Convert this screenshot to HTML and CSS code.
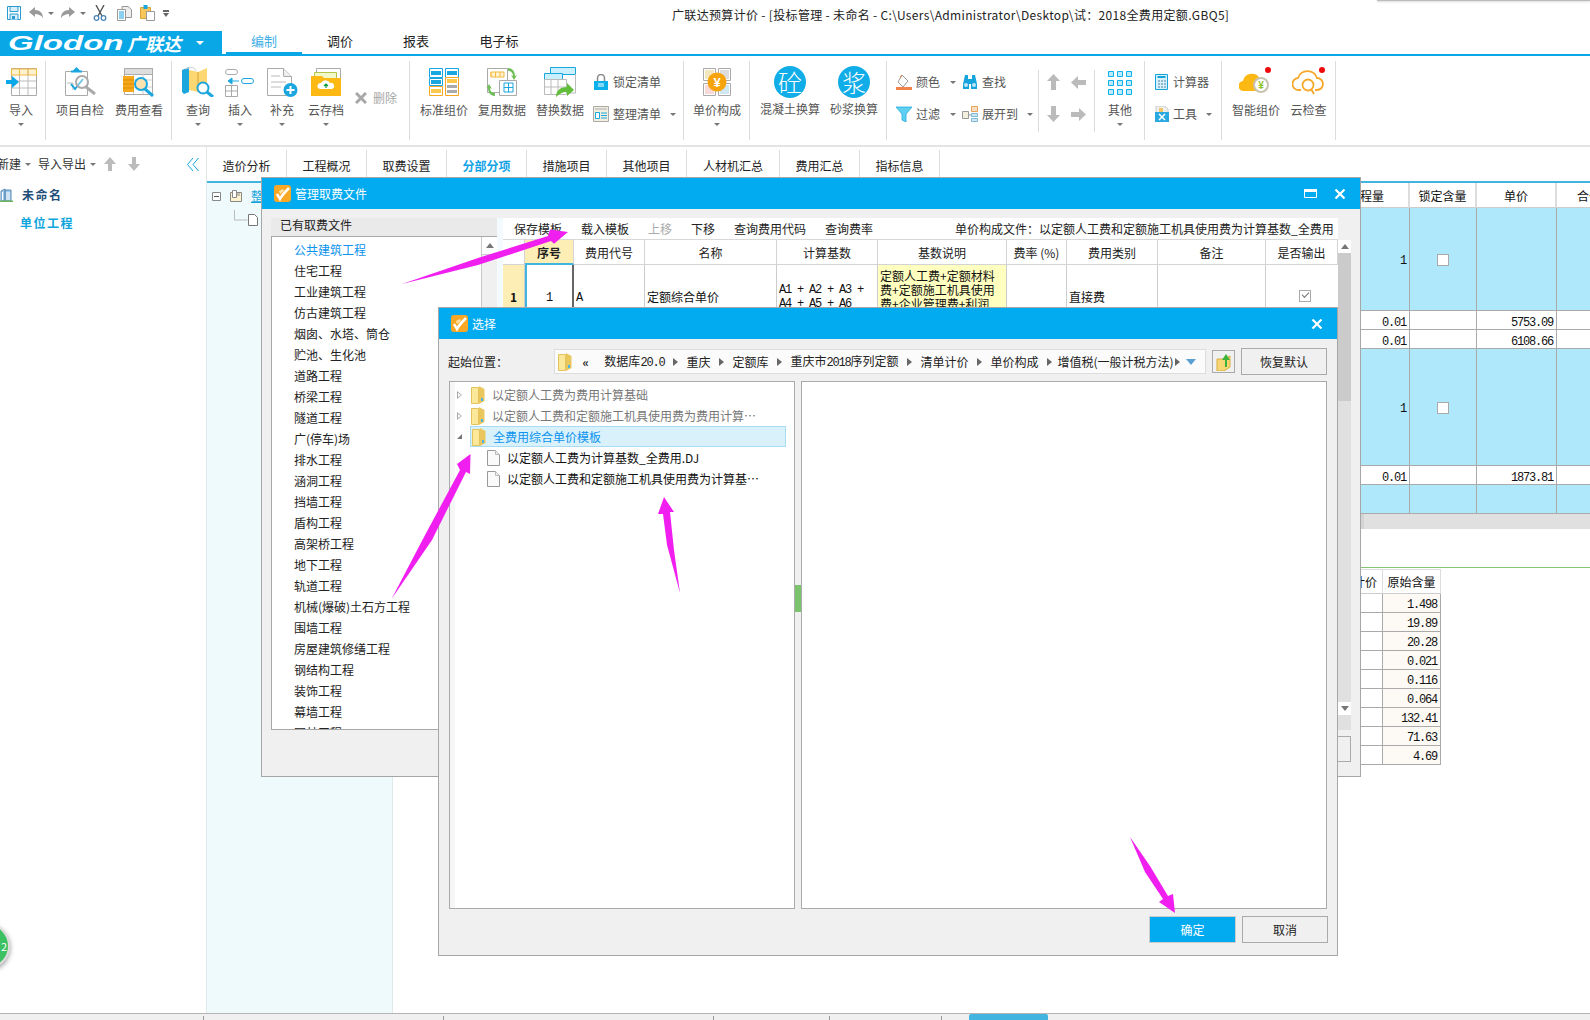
FILE: index.html
```html
<!DOCTYPE html>
<html lang="zh">
<head>
<meta charset="utf-8">
<title>广联达预算计价</title>
<link rel="stylesheet" href="styles.css">
</head>
<body>
<header class="qa-row">
  <div class="qa">
    <svg class="q-save" width="14" height="14" viewBox="0 0 14 14"><path d="M.5.5h13v13H.5z" fill="#fff" stroke="#2a9bd0"/><path d="M3 .5h8v5H3zM3 13.500V8h8v5.500" fill="#d8eef8" stroke="#2a9bd0"/><path d="M5 10h3v3H5z" fill="#2a9bd0"/></svg>
    <svg class="q-undo" width="14" height="12" viewBox="0 0 14 12"><path d="M6 0 0 5l6 5V7c3 0 6 1 8 4 0-5-3-8-8-8z" fill="#9a9a9a"/></svg>
    <i class="tri q-t"></i>
    <svg class="q-redo" width="14" height="12" viewBox="0 0 14 12"><path d="M8 0l6 5-6 5V7c-3 0-6 1-8 4 0-5 3-8 8-8z" fill="#9a9a9a"/></svg>
    <i class="tri q-t"></i>
    <svg class="q-cut" width="14" height="16" viewBox="0 0 14 16"><path d="M3 0l6 11M11 0 5 11" stroke="#555" stroke-width="1.400" fill="none"/><circle cx="3.500" cy="13" r="2.300" fill="none" stroke="#4a86b8" stroke-width="1.300"/><circle cx="10.500" cy="13" r="2.300" fill="none" stroke="#4a86b8" stroke-width="1.300"/></svg>
    <svg class="q-copy" width="15" height="15" viewBox="0 0 15 15"><path d="M5 .5h6l3.500 3v8H5z" fill="#eee" stroke="#999"/><path d="M.5 3.500h8v11h-8z" fill="#fff" stroke="#999"/><path d="M2 6h5M2 8h5M2 10h5M2 12h5" stroke="#1a9fe0"/></svg>
    <svg class="q-paste" width="15" height="16" viewBox="0 0 15 16"><path d="M.5 2.500h10v11H.5z" fill="#f6c65b" stroke="#d9a43a"/><path d="M3.500 0h4v4h-4z" fill="#1aa7e0"/><path d="M6.500 6.500h8v9h-8z" fill="#fff" stroke="#999"/></svg>
    <svg class="q-more" width="6" height="7" viewBox="0 0 6 7"><path d="M0 0h6v2H0zM0 3h6L3 7z" fill="#666"/></svg>
  </div>
  <div class="win-title">广联达预算计价 - [投标管理 - 未命名 - C:\Users\Administrator\Desktop\试：2018全费用定额.GBQ5]</div>
</header>

<nav class="nav-row">
  <div class="brand"><span class="brand-en">Glodon</span><span class="brand-cn">广联达</span><i class="tri tri-w"></i></div>
  <div class="nav-tabs">
    <span class="nav-tab on">编制</span><span class="nav-tab">调价</span><span class="nav-tab">报表</span><span class="nav-tab wide">电子标</span>
  </div>
</nav>

<section class="ribbon">
  <div class="grp g1">
    <div class="rb w42"><svg width="31" height="30" viewBox="0 0 31 30"><path d="M5.500 1.500h25v27h-25z" fill="#fff" stroke="#aaa"/><path d="M5.500 2h25v6h-25z" fill="#fff3cf" stroke="#f5b942"/><path d="M13.500 2v26M22 2v26M6 14h24M6 21h24" stroke="#bbb"/><path d="M13.500 2v6M22 2v6" stroke="#f5b942"/><path d="M0 13h6V9l7 6-7 6v-4H0z" fill="#09a8ea"/></svg><b>导入</b><i class="tri"></i></div>
  </div>
  <div class="grp g2">
    <div class="rb w58"><svg width="32" height="30" viewBox="0 0 32 30"><path d="M1.500 4.500h22v24h-22z" fill="#fff" stroke="#aaa"/><path d="M9 3.500 12.500 0 16 3.500h2v2H7v-2z" fill="#1aa7e0"/><path d="M3 16h6v7" fill="none" stroke="#bbb"/><path d="M7 17l4 5 8-10" fill="none" stroke="#15a3dc" stroke-width="2"/><circle cx="18" cy="15" r="6" fill="#fff" fill-opacity=".4" stroke="#aaa" stroke-width="2"/><path d="M22 20l9 7" stroke="#aaa" stroke-width="3"/></svg><b>项目自检</b></div>
    <div class="rb w58 m1"><svg width="32" height="30" viewBox="0 0 32 30"><path d="M1.500 1.500h28v26h-28z" fill="#fff" stroke="#aaa"/><path d="M1.500 1.500h28v6h-28z" fill="#ddd" stroke="#aaa"/><path d="M10.500 7v20M20 7v20M2 13h27M2 20h27" stroke="#ccc"/><path d="M0 9h11v16H0z" fill="#f6a81c"/><path d="M0 13h11M0 17h11M0 21h11" stroke="#e08c00"/><circle cx="18" cy="17" r="6" fill="#fbe3b0" stroke="#1aa7e0" stroke-width="2"/><path d="M22 22l8 7" stroke="#1aa7e0" stroke-width="3"/></svg><b>费用查看</b></div>
  </div>
  <div class="grp g3">
    <div class="rb w42"><svg width="32" height="30" viewBox="0 0 32 30"><path d="M0 3l7-3v25l-5 2-2-2z" fill="#1ba6dd"/><path d="M7 3l9 2 9-4v20l-9 4-9-2z" fill="#fcd772"/><path d="M16 5v20" stroke="#d9a43a"/><path d="M3 2l8-2 3 4" fill="none" stroke="#ccc"/><circle cx="21" cy="21" r="5.500" fill="#fff" stroke="#1ba6dd" stroke-width="2"/><path d="M25 25l6 5" stroke="#1ba6dd" stroke-width="3"/></svg><b>查询</b><i class="tri"></i></div>
    <div class="rb w42"><svg width="30" height="30" viewBox="0 0 30 30"><rect x=".5" y="2.500" width="12" height="5" rx="2.500" fill="#fff" stroke="#aaa"/><rect x="16.500" y="11.500" width="12" height="5" rx="2.500" fill="#fff" stroke="#1aa7e0"/><path d="M14 14H7V11L3 14l4 3v-3" fill="#1aa7e0" stroke="#1aa7e0"/><path d="M.5 18.500h12v11H.5zM.5 24h12M6.500 19v10" fill="#fff" stroke="#aaa"/></svg><b>插入</b><i class="tri"></i></div>
    <div class="rb w42"><svg width="31" height="30" viewBox="0 0 31 30"><path d="M.5 1.500h16l8 8v19H.5z" fill="#fff" stroke="#aaa"/><path d="M16.500 1.500v8h8" fill="#eee" stroke="#aaa"/><path d="M4 9h9M4 15h15M4 20h10" stroke="#ddd" stroke-width="2"/><circle cx="23.500" cy="23" r="7" fill="#1aa7e0"/><path d="M23.500 19v8M19.500 23h8" stroke="#fff" stroke-width="2"/></svg><b>补充</b><i class="tri"></i></div>
    <div class="rb w42 m2"><svg width="31" height="30" viewBox="0 0 31 30"><path d="M5.500 1.500h24v14h-24z" fill="#fff" stroke="#aaa"/><path d="M3.500 5.500h22v14h-22z" fill="#f3f8c9" stroke="#b3c44c"/><path d="M0 9h11l2 2h17v18H0z" fill="#fcb813"/><path d="M9 22a3 3 0 0 1 1-6 5 5 0 0 1 9 0 3 3 0 0 1 2 6z" fill="#fff"/><path d="M15 21v-4M13 19l2-2 2 2" fill="none" stroke="#0a9b3b" stroke-width="1.200"/></svg><b>云存档</b><i class="tri"></i></div>
    <div class="del"><svg width="12" height="12" viewBox="0 0 12 12"><path d="M1 1l10 10M11 1 1 11" stroke="#a8a8a8" stroke-width="3"/></svg><span>删除</span></div>
  </div>
  <div class="grp g4">
    <div class="rb w58"><svg width="30" height="30" viewBox="0 0 30 30"><path d="M.5 1.500h13v9H.5z" fill="#fff" stroke="#1aa7e0"/><path d="M2 4h10v4H2z" fill="#1aa7e0"/><path d="M.5 11.500h13v7H.5z" fill="#fff" stroke="#1aa7e0"/><path d="M2 13h10v4H2z" fill="#1aa7e0"/><path d="M.5 19.500h13v9H.5z" fill="#fff" stroke="#f5a623"/><path d="M2 22h10v4H2z" fill="#fbc94c"/><path d="M16.500 1.500h13v9h-13z" fill="#fff" stroke="#1aa7e0"/><path d="M18 4h10v4H18z" fill="#1aa7e0"/><path d="M16.500 10.500h13v18h-13z" fill="#fff" stroke="#f5a623"/><path d="M18 12h10v4H18z" fill="#fbc94c"/><path d="M18 18h10v3H18zM18 23h10v3H18z" fill="#aaa"/></svg><b>标准组价</b></div>
    <div class="rb w58"><svg width="30" height="30" viewBox="0 0 30 30"><path d="M.5 1.500h20v24H.5z" fill="#fff" stroke="#aaa"/><path d="M4 5h13v5H4zM4 5v5M8.500 5v5M13 5v5" fill="#fff3cf" stroke="#f5b942"/><path d="M12.500 13.500h17v15h-17z" fill="#fff" stroke="#aaa"/><path d="M17 16h9v9h-9zM21.500 16v9M17 20.500h9" fill="#fff" stroke="#1aa7e0"/><path d="M21 1c4 0 7 3 7 8l2-1-3 5-3-5 2 1c0-3-2-5-5-5z" fill="#6fbe57"/><path d="M7 29c-4 0-7-3-7-8l-2 1 3-5 3 5-2-1c0 3 2 5 5 5z" transform="translate(1 0)" fill="#6fbe57"/></svg><b>复用数据</b></div>
    <div class="rb w58"><svg width="33" height="30" viewBox="0 0 33 30"><path d="M6.500 .5h25v7h-25z" fill="#c9f0fc" stroke="#1aa7e0"/><path d="M31.500 7v19H20" fill="none" stroke="#bbb"/><path d="M.5 6.500h18v6H.5z" fill="#c9f0fc" stroke="#1aa7e0"/><path d="M.5 12.500h22v15H.5zM7 13v14M14 13v14M1 20h21" fill="#fff" stroke="#bbb"/><path d="M12 30c0-6 4-10 11-10v-4l7 7-7 6v-4c-5 0-8 2-11 5z" fill="#62bd3a"/></svg><b>替换数据</b></div>
    <div class="stack st-g4">
      <div class="sm"><svg width="16" height="16" viewBox="0 0 16 16"><path d="M4.500 7V4a3.500 3.500 0 0 1 7 0v3" fill="none" stroke="#888" stroke-width="1.500"/><path d="M1 7h14v9H1z" fill="#0ab1ea"/><path d="M5 10h6M5 12h6" stroke="#fff"/></svg><span>锁定清单</span></div>
      <div class="sm"><svg width="16" height="16" viewBox="0 0 16 16"><path d="M.5.5h15v15H.5z" fill="#f3efdc" stroke="#aaa"/><path d="M2 3h12" stroke="#ccc" stroke-width="2"/><path d="M2.500 6.500h4v6h-4zM8 7h6M8 9.500h6M8 12h6" fill="#fff" stroke="#1aa7e0"/></svg><span>整理清单</span><i class="tri t-z"></i></div>
    </div>
  </div>
  <div class="grp g5">
    <div class="rb w66"><svg width="30" height="30" viewBox="0 0 30 30"><path d="M1.500 1.500h12v12h-12zM16.500 1.500h12v12h-12zM1.500 16.500h12v12h-12zM16.500 16.500h12v12h-12z" fill="#fff" stroke="#aaa"/><path d="M3 3h9v9H3z" fill="#f3e7bd"/><path d="M18 3h9v9h-9z" fill="#ddd"/><path d="M3 18h9v9H3z" fill="#f7d9d9"/><path d="M18 18h9v9h-9z" fill="#cfe7f3"/><circle cx="15" cy="15" r="9.500" fill="#f7a30b"/><text x="15" y="20" class="yen">¥</text></svg><b>单价构成</b><i class="tri"></i></div>
  </div>
  <div class="grp g6">
    <div class="rb w64"><span class="circ">砼</span><b>混凝土换算</b></div>
    <div class="rb w64"><span class="circ">浆</span><b>砂浆换算</b></div>
  </div>
  <div class="grp g7 short">
    <div class="stack col66">
      <div class="sm"><svg width="16" height="16" viewBox="0 0 16 16"><path d="M6 1l6 6-5 6-5-5z" fill="#fff" stroke="#999"/><path d="M6 1 4 4" stroke="#d8813d"/><path d="M0 13h16v3H0z" fill="#f0824a"/></svg><span>颜色</span><i class="tri t-c"></i></div>
      <div class="sm"><svg width="16" height="16" viewBox="0 0 16 16"><path d="M0 1h16L10 8v8l-4-2V8z" fill="#5fd0f2" stroke="#22a8dc" stroke-width=".8"/></svg><span>过滤</span><i class="tri t-c"></i></div>
    </div>
    <div class="stack">
      <div class="sm"><svg width="16" height="16" viewBox="0 0 16 16"><path d="M3 1h3v4h4V1h3l2 9v5H9v-5H7v5H1v-5z" fill="#15a5dc"/><circle cx="4" cy="11" r="2" fill="#bfe6f6"/><circle cx="12" cy="11" r="2" fill="#bfe6f6"/></svg><span>查找</span></div>
      <div class="sm"><svg width="16" height="16" viewBox="0 0 16 16"><path d="M.5 5.500h6v7h-6z" fill="#f3efdc" stroke="#999"/><path d="M9.500 .5h6v5h-6z" fill="#f7e0c2" stroke="#e8a25a"/><path d="M9.500 7.500h6v3h-6zM9.500 12.500h6v3h-6z" fill="#cfe7f3" stroke="#7dbad8"/><path d="M7 9h2" stroke="#999"/></svg><span>展开到</span><i class="tri t-e"></i></div>
    </div>
  </div>
  <div class="grp g8 short">
    <div class="stack arrows">
      <svg width="13" height="16" viewBox="0 0 13 16"><path d="M6.500 0 13 7H9v9H4V7H0z" fill="#bbb"/></svg>
      <svg width="15" height="13" viewBox="0 0 15 13"><path d="M0 6.500 7 0v4h8v5H7v4z" fill="#bbb"/></svg>
      <svg width="13" height="16" viewBox="0 0 13 16"><path d="M6.500 16 13 9H9V0H4v9H0z" fill="#bbb"/></svg>
      <svg width="15" height="13" viewBox="0 0 15 13"><path d="M15 6.500 8 0v4H0v5h8v4z" fill="#bbb"/></svg>
    </div>
  </div>
  <div class="grp g9">
    <div class="rb w50"><svg width="26" height="30" viewBox="0 0 26 30"><g fill="#bfeafa" stroke="#0ab1ea"><path d="M1.500 4.500h5v5h-5zM10.500 4.500h5v5h-5zM19.500 4.500h5v5h-5z"/><path d="M1.500 13.500h5v5h-5zM10.500 13.500h5v5h-5zM19.500 13.500h5v5h-5z"/><path d="M1.500 22.500h5v5h-5zM10.500 22.500h5v5h-5zM19.500 22.500h5v5h-5z"/></g></svg><b>其他</b><i class="tri"></i></div>
  </div>
  <div class="grp g10">
    <div class="stack">
      <div class="sm"><svg width="14" height="16" viewBox="0 0 14 16"><path d="M.5.5h12v15H.5z" fill="#d8f2fc" stroke="#15a5dc"/><path d="M2.500 3h8" stroke="#15a5dc" stroke-width="2"/><path d="M3 7h2M6 7h2M9 7h2M3 10h2M6 10h2M9 10h2M3 13h2M6 13h2M9 13h2" stroke="#4a7fa0"/></svg><span>计算器</span></div>
      <div class="sm"><svg width="14" height="16" viewBox="0 0 14 16"><path d="M1 0h9l3 3v5H1z" fill="#eee" stroke="#ccc"/><path d="M4 2h4v4H4z" fill="#f3c668"/><path d="M0 6h14v10H0z" fill="#29a9e0"/><path d="M4 8l6 6M10 8l-6 6" stroke="#fff" stroke-width="1.500"/></svg><span>工具</span><i class="tri t-t"></i></div>
    </div>
  </div>
  <div class="grp g11">
    <div class="rb w60"><svg width="34" height="30" viewBox="0 0 34 30"><path d="M5 24a5 5 0 0 1-1-10 9 9 0 0 1 17-2v12z" fill="#fcb813"/><circle cx="22" cy="18" r="7" fill="#fff" stroke="#c8c2b0" stroke-width="2"/><text x="22" y="22" class="yen2">¥</text><circle cx="29" cy="3" r="3" fill="#ee0a0a"/></svg><b>智能组价</b></div>
    <div class="rb w45"><svg width="34" height="30" viewBox="0 0 34 30"><path d="M9 23H7a6 6 0 0 1-1-12 10 10 0 0 1 19 0 6 6 0 0 1 0 12h-2" fill="none" stroke="#f7a72a" stroke-width="1.800"/><circle cx="16" cy="18" r="5.500" fill="#fff" stroke="#f7a72a" stroke-width="1.800"/><path d="M19 22l3 5" stroke="#f7a72a" stroke-width="1.800"/><circle cx="30" cy="3" r="3" fill="#ee0a0a"/></svg><b>云检查</b></div>
  </div>
</section>

<main class="work">
  <aside class="side">
    <div class="side-tools">
      <span class="st-a">新建</span><i class="tri"></i><span class="st-b">导入导出</span><i class="tri"></i>
      <svg class="st-up" width="12" height="14" viewBox="0 0 12 14"><path d="M6 0l6 7H8v7H4V7H0z" fill="#bbb"/></svg>
      <svg class="st-dn" width="12" height="14" viewBox="0 0 12 14"><path d="M6 14l6-7H8V0H4v7H0z" fill="#bbb"/></svg>
      <svg class="st-col" width="12" height="13" viewBox="0 0 12 13"><path d="M6 0 .5 6.500 6 13M11.500 0 6 6.500l5.500 6.500" fill="none" stroke="#15a5dc"/></svg>
    </div>
    <div class="proj">
      <svg width="13" height="14" viewBox="0 0 13 14"><path d="M1 13V3l4-2v12zM5 2h6v11H5z" fill="#9fc7e8" stroke="#5f8db5"/><path d="M7 4v8M9 4v8M2.500 4v8" stroke="#fff"/><path d="M0 12.500h13V14H0z" fill="#6db45a"/></svg>
      <span>未命名</span>
    </div>
    <div class="unit">单位工程</div>
    <div class="badge"><span>2</span></div>
  </aside>
  <div class="content">
    <div class="page-tabs">
      <span class="pt">造价分析</span><span class="pt">工程概况</span><span class="pt">取费设置</span><span class="pt on">分部分项</span><span class="pt">措施项目</span><span class="pt">其他项目</span><span class="pt w93">人材机汇总</span><span class="pt">费用汇总</span><span class="pt">指标信息</span>
    </div>
    <div class="pane">
      <div class="tree">
        <div class="tree-row">
          <svg width="9" height="9" viewBox="0 0 9 9"><path d="M.5.5h8v8h-8z" fill="#fff" stroke="#888"/><path d="M2 4.500h5" stroke="#555"/></svg>
          <svg width="12" height="12" viewBox="0 0 12 12"><path d="M.5 2.500h11v9H.5z" fill="#fff3cf" stroke="#888"/><path d="M2.500.5h4v7h-4zM7 3h3M7 5h3" fill="#fff" stroke="#888"/></svg>
          <span class="tree-link">整个项目</span>
        </div>
        <div class="tree-sub">
          <svg width="24" height="16" viewBox="0 0 24 16"><path d="M.5 0v10h13" fill="none" stroke="#bbb"/><path d="M14.500 4.500h6l3 3v8h-9z" fill="#fff" stroke="#777"/></svg>
        </div>
      </div>
      <div class="tables">
        <div class="grid-up">
          <div class="gh ghead-l">工程量</div><div class="gh">锁定含量</div><div class="gh">单价</div><div class="gh ghead-x">合价</div>
          <div class="gc blue tall1 r">1</div><div class="gc blue tall1 cb"><i class="chk"></i></div><div class="gc blue tall1"></div><div class="gc blue tall1"></div>
          <div class="gc r">0.01</div><div class="gc"></div><div class="gc r">5753.09</div><div class="gc"></div>
          <div class="gc r">0.01</div><div class="gc"></div><div class="gc r">6108.66</div><div class="gc"></div>
          <div class="gc blue tall2 r">1</div><div class="gc blue tall2 cb"><i class="chk"></i></div><div class="gc blue tall2"></div><div class="gc blue tall2"></div>
          <div class="gc r">0.01</div><div class="gc"></div><div class="gc r">1873.81</div><div class="gc"></div>
          <div class="gc blue"></div><div class="gc blue"></div><div class="gc blue"></div><div class="gc blue"></div>
        </div>
        <div class="hscroll"></div>
        <div class="green-line"></div>
        <div class="grid-low">
          <div class="lh lh-l">计价</div><div class="lh">原始含量</div>
          <div class="lc"></div><div class="lv">1.498</div>
          <div class="lc"></div><div class="lv">19.89</div>
          <div class="lc"></div><div class="lv">20.28</div>
          <div class="lc"></div><div class="lv">0.021</div>
          <div class="lc"></div><div class="lv">0.116</div>
          <div class="lc"></div><div class="lv">0.064</div>
          <div class="lc"></div><div class="lv">132.41</div>
          <div class="lc"></div><div class="lv">71.63</div>
          <div class="lc"></div><div class="lv">4.69</div>
        </div>
      </div>
    </div>
  </div>
</main>

<footer class="status">
  <span class="s1"></span><span class="s2"></span><span class="s3"></span><span class="s4"></span><span class="s5"></span><span class="s6"></span>
</footer>

<div class="top-shadow"></div>

<section class="dlg dlg-a">
  <div class="dlg-title">
    <svg width="17" height="17" viewBox="0 0 17 17"><rect width="17" height="17" rx="3" fill="#f9a825"/><path d="M3 9c1 2 2 3 3 5 2-4 5-7 9-11" fill="none" stroke="#fff" stroke-width="2.500"/><path d="M5 6l4-2 1 2-4 3z" fill="#fde3a7"/></svg>
    <span class="dlg-name">管理取费文件</span>
    <svg class="max-ic" width="13" height="9" viewBox="0 0 13 9"><path d="M.5.5h12v8H.5z" fill="none" stroke="#fff"/><path d="M0 0h13v3H0z" fill="#fff"/></svg>
    <svg class="x-ic" width="12" height="10" viewBox="0 0 12 10"><path d="M1.500 .5l9 9M10.500 .5l-9 9" stroke="#fff" stroke-width="2.200"/></svg>
  </div>
  <div class="a-main">
    <div class="a-left">
      <div class="a-cap">已有取费文件</div>
      <div class="a-list">
        <ul>
          <li class="sel">公共建筑工程</li><li>住宅工程</li><li>工业建筑工程</li><li>仿古建筑工程</li><li>烟囱、水塔、筒仓</li><li>贮池、生化池</li><li>道路工程</li><li>桥梁工程</li><li>隧道工程</li><li>广(停车)场</li><li>排水工程</li><li>涵洞工程</li><li>挡墙工程</li><li>盾构工程</li><li>高架桥工程</li><li>地下工程</li><li>轨道工程</li><li>机械(爆破)土石方工程</li><li>围墙工程</li><li>房屋建筑修缮工程</li><li>钢结构工程</li><li>装饰工程</li><li>幕墙工程</li><li>园林工程</li>
        </ul>
        <div class="vbar"><span class="vbtn"><i class="up"></i></span></div>
      </div>
    </div>
    <div class="a-strip"></div>
    <div class="a-right">
      <div class="a-tools">
        <span>保存模板</span><span>载入模板</span><span class="off">上移</span><span>下移</span><span>查询费用代码</span><span>查询费率</span>
        <span class="a-file">单价构成文件：以定额人工费和定额施工机具使用费为计算基数_全费用</span>
      </div>
      <div class="fee-grid">
        <div class="fh"></div><div class="fh seq">序号</div><div class="fh">费用代号</div><div class="fh">名称</div><div class="fh">计算基数</div><div class="fh">基数说明</div><div class="fh">费率 (%)</div><div class="fh">费用类别</div><div class="fh">备注</div><div class="fh">是否输出</div>
        <div class="fc rowno">1</div><div class="fc cur">1</div><div class="fc mono-c">A</div><div class="fc">定额综合单价</div><div class="fc mono-c base">A1 + A2 + A3 + A4 + A5 + A6</div><div class="fc note">定额人工费+定额材料费+定额施工机具使用费+企业管理费+利润</div><div class="fc"></div><div class="fc">直接费</div><div class="fc"></div><div class="fc chkc"><i class="chk on"></i></div>
      </div>
    </div>
    <div class="a-vbar">
      <span class="vb-btn"><i class="up"></i></span><span class="vb-thumb"></span><span class="vb-track"></span><span class="vb-btn"><i class="down"></i></span>
    </div>
  </div>
  <div class="a-foot"><span class="a-btn"></span></div>
</section>

<section class="dlg dlg-b">
  <div class="dlg-title">
    <svg width="17" height="17" viewBox="0 0 17 17"><rect width="17" height="17" rx="3" fill="#f9a825"/><path d="M3 9c1 2 2 3 3 5 2-4 5-7 9-11" fill="none" stroke="#fff" stroke-width="2.500"/><path d="M5 6l4-2 1 2-4 3z" fill="#fde3a7"/></svg>
    <span class="dlg-name">选择</span>
    <svg class="x-ic" width="12" height="10" viewBox="0 0 12 10"><path d="M1.500 .5l9 9M10.500 .5l-9 9" stroke="#fff" stroke-width="2.200"/></svg>
  </div>
  <div class="b-path-row">
    <span class="b-label">起始位置：</span>
    <div class="b-path">
      <svg class="folder" width="14" height="18" viewBox="0 0 14 18"><path d="M.5 1.500h7v16h-7z" fill="#fbe89a" stroke="#e3c35a"/><path d="M8 0l5.500 3v12l-5.500 3z" fill="#e9c75e"/><path d="M10 12h2v3h-2z" fill="#4fb2e6"/></svg>
      <b class="dbl">«</b><span class="c c1">数据库<em>20.0</em></span><i class="sep"></i><span>重庆</span><i class="sep"></i><span>定额库</span><i class="sep"></i><span>重庆市<em>2018</em>序列定额</span><i class="sep"></i><span>清单计价</span><i class="sep"></i><span>单价构成</span><i class="sep"></i><span class="tax">增值税(一般计税方法)</span><i class="sep s-last"></i><i class="path-down"></i>
    </div>
    <span class="b-go"><svg width="16" height="18" viewBox="0 0 16 18"><path d="M1 6h7l6-3v11l-6 4H1z" fill="#f7d774" stroke="#d9ae3c"/><path d="M9 14V7H6l4-6 4 6h-3v7z" fill="#3db23a"/></svg></span>
    <span class="b-btn">恢复默认</span>
  </div>
  <div class="b-panels">
    <div class="b-tree">
      <div class="b-row gray"><i class="tw"></i><svg class="folder" width="14" height="18" viewBox="0 0 14 18"><path d="M.5 1.500h7v16h-7z" fill="#fbe89a" stroke="#e3c35a"/><path d="M8 0l5.500 3v12l-5.500 3z" fill="#e9c75e"/><path d="M10 12h2v3h-2z" fill="#4fb2e6"/></svg><span>以定额人工费为费用计算基础</span></div>
      <div class="b-row gray"><i class="tw"></i><svg class="folder" width="14" height="18" viewBox="0 0 14 18"><path d="M.5 1.500h7v16h-7z" fill="#fbe89a" stroke="#e3c35a"/><path d="M8 0l5.500 3v12l-5.500 3z" fill="#e9c75e"/><path d="M10 12h2v3h-2z" fill="#4fb2e6"/></svg><span>以定额人工费和定额施工机具使用费为费用计算…</span></div>
      <div class="b-row cur"><i class="tw open"></i><svg class="folder" width="14" height="18" viewBox="0 0 14 18"><path d="M.5 1.500h7v16h-7z" fill="#fbe89a" stroke="#e3c35a"/><path d="M8 0l5.500 3v12l-5.500 3z" fill="#e9c75e"/><path d="M10 12h2v3h-2z" fill="#4fb2e6"/></svg><span>全费用综合单价模板</span></div>
      <div class="b-row leaf"><svg width="13" height="16" viewBox="0 0 13 16"><path d="M.5.5h8l4 4v11H.5z" fill="#fafafa" stroke="#999"/><path d="M8.500 .5v4h4" fill="#eee" stroke="#bbb"/></svg><span>以定额人工费为计算基数_全费用.DJ</span></div>
      <div class="b-row leaf"><svg width="13" height="16" viewBox="0 0 13 16"><path d="M.5.5h8l4 4v11H.5z" fill="#fafafa" stroke="#999"/><path d="M8.500 .5v4h4" fill="#eee" stroke="#bbb"/></svg><span>以定额人工费和定额施工机具使用费为计算基…</span></div>
    </div>
    <div class="b-split"><span></span></div>
    <div class="b-view"></div>
  </div>
  <div class="b-foot">
    <span class="ok">确定</span><span class="b-btn">取消</span>
  </div>
</section>

<svg class="marks" width="1590" height="1020" viewBox="0 0 1590 1020">
  <path d="M402 284 478 258 548 236 550 229.500 568 232 554 243.700 551 241 478 265z"/>
  <path d="M391.500 599 424 537 460 470 457 464 470.500 454 470 474 466 472 432 540z"/>
  <path d="M664 497 674 512 670 512 674 550 680 593 667 545 663 514 658 514z"/>
  <path d="M1130 837 1150 866 1168 896 1173 894 1175 913 1159 902 1163 899 1145 872z"/>
</svg>
</body>
</html>
```

FILE: styles.css
```css
* { box-sizing: border-box; }
html, body { margin: 0; padding: 0; }
body {
  width: 1590px; height: 1020px; overflow: hidden; position: relative;
  display: flex; flex-direction: column; background: #fff; color: #111;
  font: 12px/16px "Noto Sans CJK SC", "Liberation Sans", sans-serif;
}
svg { display: block; flex: none; }
em { font: normal 12px/16px "Liberation Mono", monospace; letter-spacing: -1.2px; }
i { font-style: normal; }
.tri { display: inline-block; width: 0; height: 0; border: 3px solid transparent; border-top: 3px solid #777; border-bottom: 0; flex: none; }

/* quick access */
.qa-row { height: 31px; display: flex; align-items: flex-start; flex: none; }
.qa { width: 168px; height: 26px; display: flex; align-items: center; padding-left: 7px; flex: none; }
.q-undo { margin-left: 8px; }
.q-t { margin-left: 5px; }
.q-redo { margin-left: 7px; }
.q-cut { margin-left: 7px; }
.q-copy { margin-left: 10px; }
.q-paste { margin-left: 8px; }
.q-more { margin-left: 8px; }
.win-title { margin-left: 504px; white-space: nowrap; line-height: 29px; color: #222; letter-spacing: .33px; }
.top-shadow { position: absolute; left: 1377px; right: 0; top: 0; height: 1px; background: #bbb; box-shadow: 0 1px 2px #ccc; }

/* nav */
.nav-row { height: 25px; flex: none; display: flex; border-bottom: 2px solid #0aa7e6; }
.brand { width: 222px; height: 24px; background: #0aa7e6; color: #fff; display: flex; align-items: center; padding-left: 8px; flex: none; }
.brand-en { font: italic bold 20px/24px "Liberation Sans", sans-serif; width: 119px; transform: scaleX(1.65); transform-origin: left center; white-space: nowrap; }
.brand-cn { font: italic bold 18px/24px "Noto Sans CJK SC", sans-serif; width: 55px; white-space: nowrap; }
.tri-w { border-top-color: #fff; border-width: 4px; border-bottom: 0; margin-left: 14px; }
.nav-tabs { display: flex; padding-left: 4px; }
.nav-tab { width: 76px; height: 23px; line-height: 20px; font-size: 13px; text-align: center; color: #222; }
.nav-tab.wide { width: 90px; }
.nav-tab.on { color: #3fb0e4; border-bottom: 2px solid #0aa7e6; }

/* ribbon */
.ribbon { height: 91px; flex: none; display: flex; border-bottom: 2px solid #e4e4e4; align-items: flex-start; }
.grp { height: 79px; margin-top: 5px; display: flex; flex: none; border-right: 1px solid #dcdcdc; color: #555; }
.grp.short { border-right: 0; background: linear-gradient(#dcdcdc, #dcdcdc) right 9px / 1px 62px no-repeat; }
.g1 { width: 46px; }
.g2 { width: 126px; padding-left: 5px; }
.g3 { width: 238px; padding-left: 5px; }
.g4 { width: 274px; padding-left: 5px; }
.g5 { width: 66px; }
.g6 { width: 137px; padding-left: 8px; }
.g7 { width: 152px; padding-left: 9px; }
.g8 { width: 56px; padding-left: 8px; }
.g9 { width: 50px; }
.g10 { width: 77px; padding-left: 10px; }
.g11 { width: 114px; padding-left: 4px; }
.rb { display: flex; flex-direction: column; align-items: center; padding-top: 6px; flex: none; }
.rb > svg { height: 30px; margin-bottom: 5px; }
.rb b { font-weight: 400; white-space: nowrap; }
.rb .tri { margin-top: 5px; border-top-color: #777; }
.w42 { width: 42px; } .w45 { width: 45px; } .w50 { width: 50px; } .w58 { width: 58px; } .w60 { width: 60px; } .w64 { width: 64px; } .w66 { width: 66px; }
.m1 { margin-left: 1px; } .m2 { margin-left: 2px; }
.del { display: flex; align-items: center; gap: 6px; height: 16px; margin: 29px 0 0 8px; color: #a8a8a8; }
.stack { display: grid; row-gap: 16px; padding-top: 13px; align-content: start; }
.st-g4 { margin-left: 4px; }
.sm { display: flex; align-items: center; height: 16px; gap: 4px; white-space: nowrap; }
.t-z { margin-left: 5px; } .t-c { margin-left: 6px; } .t-e { margin-left: 5px; } .t-t { margin-left: 5px; }
.col66 { width: 66px; }
.arrows { grid-template-columns: 13px 15px; column-gap: 11px; align-items: center; grid-auto-rows: 16px; }
.circ { width: 32px; height: 32px; border-radius: 50%; background: #11ade8; color: #fff; display: flex; align-items: center; justify-content: center; font-size: 24px; line-height: 1; font-weight: 300; margin-bottom: 3px; margin-top: -1px; }
.yen { font: bold 13px "Liberation Sans", sans-serif; fill: #fff; text-anchor: middle; }
.yen2 { font: bold 10px "Liberation Sans", sans-serif; fill: #8fc31f; text-anchor: middle; }

/* work area */
.work { flex: 1; display: flex; min-height: 0; }
.side { width: 207px; flex: none; border-right: 1px solid #e2e8ea; position: relative; }
.side-tools { height: 34px; display: flex; align-items: center; margin-left: -3px; color: #333; }
.st-a { margin-right: 4px; }
.st-b { margin-left: 7px; margin-right: 4px; }
.st-up { margin-left: 8px; }
.st-dn { margin-left: 12px; }
.st-col { margin-left: 47px; }
.proj { display: flex; align-items: center; gap: 9px; height: 16px; margin-top: 6px; color: #1f4e79; font-weight: 700; letter-spacing: 1.500px; }
.unit { margin: 12px 0 0 20px; color: #0ea5dc; font-weight: 700; letter-spacing: 1.500px; }
.badge { position: absolute; left: -36px; top: 776px; width: 46px; height: 46px; border-radius: 50%; background: #3cc162; border: 2px solid #ddd; box-shadow: 0 2px 5px #999; display: flex; align-items: center; justify-content: flex-end; color: #fff; font-size: 11px; padding-right: 1px; }

.content { flex: 1; min-width: 0; display: flex; flex-direction: column; }
.page-tabs { height: 36px; flex: none; display: flex; padding-top: 3px; border-bottom: 2px solid #41b4e0; align-items: flex-start; }
.pt { width: 80px; height: 27px; line-height: 32px; text-align: center; border-right: 1px solid #ddd; color: #222; flex: none; }
.pt.w93 { width: 93px; }
.pt.on { color: #12a3e6; font-weight: 700; }
.pane { flex: 1; display: flex; min-height: 0; }
.tree { width: 186px; flex: none; background: #effafd; border-right: 1px solid #dfe9ec; padding: 5px 0 0 5px; }
.tree-row { display: flex; align-items: center; gap: 9px; height: 16px; }
.tree-link { color: #15a5dc; text-decoration: underline; white-space: nowrap; }
.tree-sub { margin: 6px 0 0 22px; }
.tables { flex: 1; min-width: 0; overflow: hidden; }

.grid-up { display: grid; grid-template-columns: 1017px 67px 80px 33px; grid-template-rows: 25px 103px 19px 19px 117px 19px 29px; font: 12px/24px "Liberation Mono", monospace; letter-spacing: -1.2px; }
.gh { border-right: 2px solid #ddd; border-bottom: 1px solid #ccc; font: 12px/26px "Noto Sans CJK SC", sans-serif; letter-spacing: 0; text-align: center; white-space: nowrap; }
.ghead-l { text-align: right; padding-right: 24px; }
.ghead-x { border-right: 0; text-align: left; padding-left: 20px; overflow: hidden; }
.gc { border-right: 1px solid #aaa; border-bottom: 1px solid #aaa; }
.gc:nth-child(4n) { border-right: 0; }
.gc.r { text-align: right; padding-right: 3px; }
.gc.blue { background: #afe8fb; }
.tall1, .tall2 { display: flex; align-items: center; justify-content: flex-end; padding-top: 3px; }
.tall1.cb, .tall2.cb { justify-content: center; padding-top: 1px; }
.chk { width: 12px; height: 12px; display: block; background: #fff; border: 1px solid #aaa; }
.chk.on { position: relative; }
.chk.on::after { content: ""; position: absolute; left: 2px; top: 1px; width: 6px; height: 3px; border-left: 1px solid #777; border-bottom: 1px solid #777; transform: rotate(-45deg); }
.hscroll { height: 15px; width: 1197px; background: linear-gradient(to right, #d4d4d4 971px, #e0e0e0 971px); }
.green-line { height: 1px; margin-top: 38px; background: #84c474; }
.grid-low { display: grid; grid-template-columns: 990px 58px; grid-template-rows: 25px; grid-auto-rows: 19px; width: 1048px; margin-top: 1px; font: 12px/26px "Liberation Mono", monospace; letter-spacing: -1.2px; }
.lh { border-right: 1px solid #ddd; border-bottom: 1px solid #ccc; border-top: 1px solid #ddd; font: 12px/23px "Noto Sans CJK SC", sans-serif; letter-spacing: 0; text-align: center; white-space: nowrap; }
.lh-l { text-align: right; padding-right: 5px; }
.lc { border-right: 1px solid #aaa; border-bottom: 1px solid #aaa; }
.lv { background: #fdfaf5; border-right: 1px solid #aaa; border-bottom: 1px solid #aaa; text-align: right; padding-right: 3px; line-height: 22px; }

.status { height: 7px; flex: none; display: flex; background: #f0f0f0; border-top: 1px solid #b5b5b5; }
.status span { border-right: 1px solid #999; height: 4px; margin-top: 2px; }
.s1 { width: 204px; } .s2 { width: 240px; } .s3 { width: 270px; } .s4 { width: 116px; } .s5 { width: 112px; }
.status .s6 { width: 79px; height: 6px; margin: 0 0 0 27px; background: #41b4e0; border: 0; border-radius: 2px 2px 0 0; }

/* dialogs */
.dlg { position: absolute; background: #f0f0f0; border: 1px solid #a6a6a6; display: flex; flex-direction: column; }
.dlg-a { left: 261px; top: 177px; width: 1100px; height: 600px; }
.dlg-b { left: 438px; top: 307px; width: 900px; height: 649px; }
.dlg-title { height: 31px; background: #02aaf0; color: #fff; display: flex; align-items: center; padding-left: 12px; flex: none; }
.dlg-name { margin-left: 4px; }
.max-ic { margin-left: auto; margin-right: 17px; }
.x-ic { margin-right: 14px; }
.dlg-b .x-ic { margin-left: auto; }

.a-main { height: 512px; margin-top: 9px; padding-left: 9px; display: flex; flex: none; }
.a-left { width: 226px; flex: none; display: flex; flex-direction: column; }
.a-cap { height: 18px; background: #eaeaea; padding-left: 9px; line-height: 13px; color: #222; flex: none; }
.a-list { height: 494px; background: #fff; border: 1px solid #a8a8a8; border-right: 0; display: flex; overflow: hidden; }
.a-list ul { list-style: none; margin: 0; padding: 2px 0 0 22px; flex: 1; }
.a-list li { height: 21px; line-height: 21px; white-space: nowrap; color: #222; }
.a-list li.sel { color: #0c93ee; }
.vbar { width: 16px; flex: none; background: #f0f0f0; border-left: 1px solid #c8c8c8; }
.vbtn { display: flex; height: 18px; background: #fff; border-bottom: 1px solid #ccc; align-items: center; justify-content: center; }
.up { display: block; width: 0; height: 0; border: 4px solid transparent; border-top: 0; border-bottom: 5px solid #777; }
.down { display: block; width: 0; height: 0; border: 4px solid transparent; border-bottom: 0; border-top: 5px solid #777; }
.a-strip { width: 6px; flex: none; background: #f4fbfe; }
.a-right { width: 835px; flex: none; background: #fff; }
.a-tools { height: 22px; display: flex; align-items: center; padding-left: 11px; white-space: nowrap; color: #222; border-bottom: 1px solid #d8d8d8; }
.a-tools span { margin-right: 19px; }
.a-tools .off { color: #aaa; }
.a-tools .a-file { margin: 0 0 0 63px; }
.fee-grid { display: grid; grid-template-columns: 22px 49px 71px 132px 101px 129px 60px 91px 108px 72px; grid-template-rows: 25px 60px; }
.fh { border-right: 1px solid #d4d4d4; border-bottom: 1px solid #d4d4d4; text-align: center; line-height: 25px; color: #222; white-space: nowrap; }
.fh.seq { background: #fdeeb5; font-weight: 700; border-bottom: 2px solid #41b4e0; }
.fc { border-right: 1px solid #ccc; padding: 24px 2px 0; line-height: 16px; color: #111; white-space: nowrap; overflow: hidden; }
.fc.rowno { background: #fdeeb5; text-align: center; font-weight: 700; }
.fc.cur { text-align: center; font: 12px/16px "Liberation Mono", monospace; padding-top: 25px; border-left: 2px solid #41b4e0; border-right: 2px solid #666; }
.mono-c { font: 12px/16px "Liberation Mono", monospace; letter-spacing: -1.2px; padding-top: 25px; }
.fc.base { white-space: normal; padding: 18px 2px 0; line-height: 14px; }
.fc.note { white-space: normal; background: #ffffbf; padding: 4px 2px 0; line-height: 14px; }
.fc.chkc { display: flex; justify-content: center; padding: 25px 0 0 6px; border-right: 0; }
.a-vbar { width: 13px; flex: none; margin-top: 22px; display: flex; flex-direction: column; background: #e0e0e0; }
.vb-btn { height: 13px; background: #fff; display: flex; align-items: center; justify-content: center; flex: none; }
.vb-thumb { height: 148px; background: #cbcbcb; flex: none; }
.vb-track { flex: none; height: 301px; }
.a-foot { display: flex; justify-content: flex-end; padding: 6px 9px 0 0; }
.a-btn { width: 86px; height: 26px; border: 1px solid #aaa; }

.b-path-row { display: grid; grid-template-columns: 106px 652px 23px 86px; align-items: center; height: 27px; margin-top: 9px; padding-left: 9px; }
.b-label { white-space: nowrap; color: #222; }
.b-path { height: 25px; width: 652px; background: #fbfbfb; border: 1px solid #ddd; display: flex; align-items: center; gap: 8.5px; padding-left: 3px; white-space: nowrap; color: #222; }
.b-path .folder { margin-right: 0; }
.dbl { font-weight: 700; margin: 0 7px 0 2px; }
.sep { width: 0; height: 0; border: 4px solid transparent; border-left: 5px solid #666; border-right: 0; flex: none; }
.tax { margin-left: -3px; margin-right: -7px; }
.path-down { width: 0; height: 0; border: 5px solid transparent; border-top: 6px solid #5aa0d0; border-bottom: 0; margin-left: -3px; }
.b-go { width: 23px; height: 23px; border: 1px solid #aaa; background: #f0f0f0; display: flex; align-items: center; justify-content: center; margin-left: 6px; }
.b-path-row .b-btn { margin-left: 12px; }
.b-btn { width: 86px; height: 27px; border: 1px solid #aaa; background: #f0f0f0; text-align: center; line-height: 25px; color: #222; display: block; flex: none; }
.b-panels { display: flex; height: 528px; margin-top: 6px; padding-left: 10px; flex: none; }
.b-tree { width: 346px; background: #fff; border: 1px solid #aaa; padding: 2px 0 0 5px; box-shadow: inset 5px 0 0 #f6f6f6; }
.b-row { height: 21px; display: flex; align-items: center; white-space: nowrap; font-size: 12px; color: #111; }
.b-row.gray { color: #777; }
.b-row.cur { color: #0c93ee; position: relative; }
.b-row.cur::before { content: ""; position: absolute; left: 15px; top: 0; width: 314px; height: 19px; background: #d9f1fb; border: 1px solid #a9dcf2; z-index: 0; }
.b-row > * { position: relative; z-index: 1; }
.tw { width: 0; height: 0; border: 4px solid transparent; border-left: 5px solid #aaa; border-right: 0; position: relative; margin: 0 9px 0 2px; }
.tw::after { content: ""; position: absolute; left: -4px; top: -2px; border: 2px solid transparent; border-left: 3px solid #fff; border-right: 0; }
.tw.open { border: 0; border-bottom: 5px solid #777; border-left: 5px solid transparent; width: 0; margin: 0 10px 0 2px; }
.tw.open::after { display: none; }
.folder { margin-right: 7px; }
.b-row.leaf { padding-left: 32px; }
.b-row.leaf svg { margin-right: 7px; }
.b-split { width: 6px; flex: none; display: flex; padding-top: 204px; align-items: flex-start; }
.b-split span { display: block; width: 6px; height: 27px; background: #7cc36d; }
.b-view { width: 526px; background: #fff; border: 1px solid #aaa; }
.b-foot { display: flex; justify-content: flex-end; gap: 6px; padding: 7px 9px 0 0; }
.ok { width: 87px; height: 27px; background: #02aaf0; border: 1px solid #ccc; color: #fff; text-align: center; line-height: 25px; }

.marks { position: absolute; left: 0; top: 0; pointer-events: none; }
.marks path { fill: #f01ff0; }
```
